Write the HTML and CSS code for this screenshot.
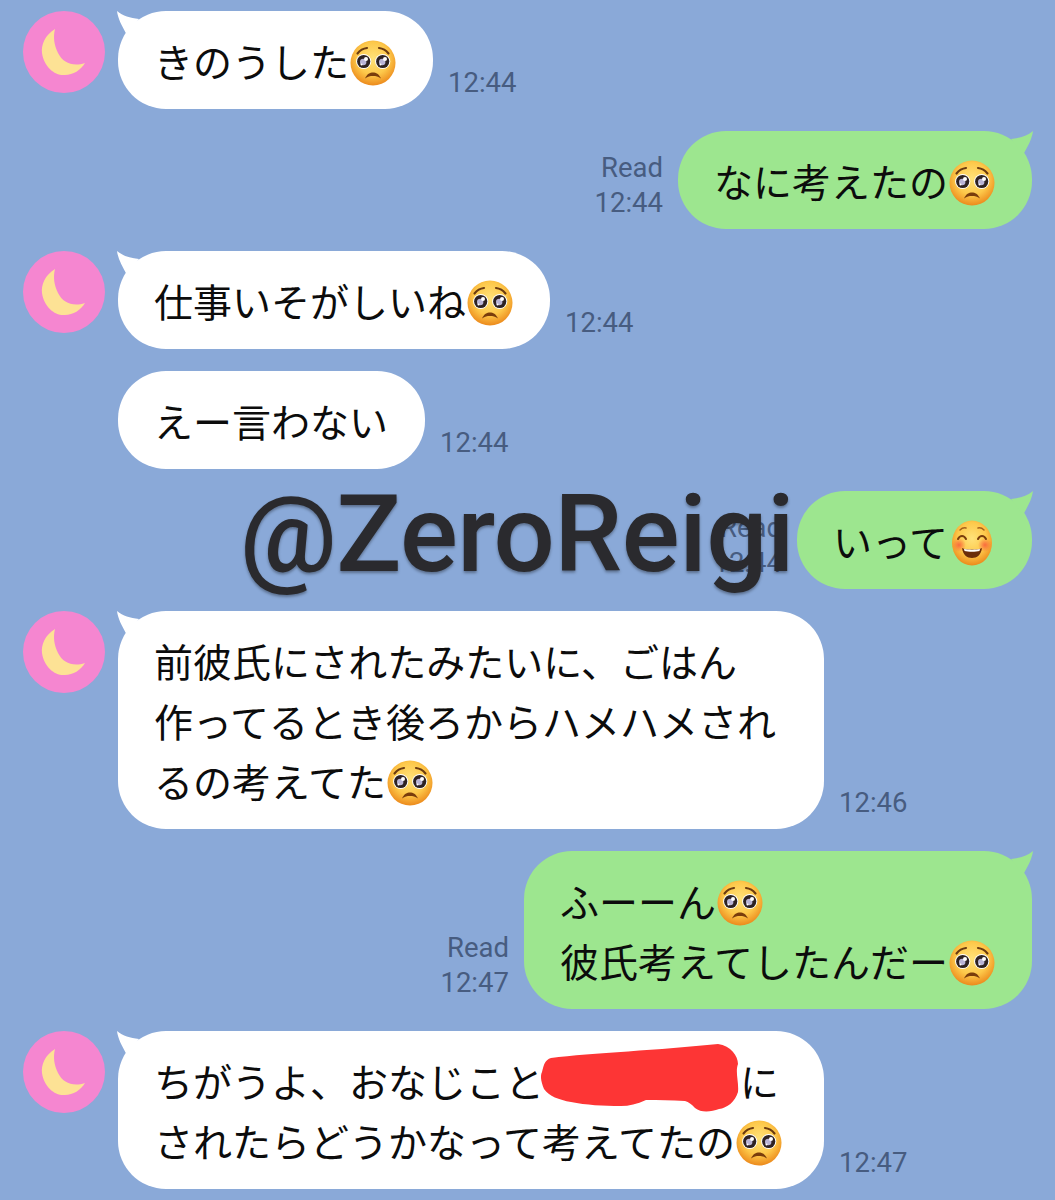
FILE: index.html
```html
<!DOCTYPE html>
<html lang="ja">
<head>
  <meta charset="UTF-8" />
  <title>Talk</title>
  <link rel="stylesheet" href="styles.css">
</head>
<body>
  <!-- shared drawings: avatar and the two emoji -->
  <svg class="defs" width="0" height="0">
    <defs>
      <radialGradient id="faceFill" cx="50%" cy="40%" r="60%">
        <stop offset="0" stop-color="#ffe27a"/>
        <stop offset="0.6" stop-color="#fdc84a"/>
        <stop offset="1" stop-color="#ec8a1c"/>
      </radialGradient>
      <radialGradient id="cheek" cx="50%" cy="50%" r="50%">
        <stop offset="0" stop-color="#f9603c" stop-opacity="0.9"/>
        <stop offset="1" stop-color="#f9603c" stop-opacity="0"/>
      </radialGradient>
      <symbol id="moon-avatar" viewBox="0 0 82 82">
        <circle cx="41" cy="41" r="41" fill="#f586d0"/>
        <path d="M32 18C22 24 18 34 19 42C21 56 32 65 42 64C50 64 58 59 62 52C50 56 40 52 35 42C31 34 30 26 32 18Z" fill="#fde295"/>
      </symbol>
      <symbol id="pleading" viewBox="0 0 46 46">
        <circle cx="23" cy="23" r="22.5" fill="url(#faceFill)"/>
        <path d="M7.500 13.500C9.500 11 13 8.500 17 8" fill="none" stroke="#6b3a10" stroke-width="2.200" stroke-linecap="round"/>
        <path d="M38.500 13.500C36.500 11 33 8.500 29 8" fill="none" stroke="#6b3a10" stroke-width="2.200" stroke-linecap="round"/>
        <circle cx="13.700" cy="21.500" r="7.600" fill="#fff"/>
        <circle cx="32.700" cy="21.500" r="7.600" fill="#fff"/>
        <circle cx="13.700" cy="21.500" r="6.600" fill="#2e2222"/>
        <circle cx="32.700" cy="21.500" r="6.600" fill="#2e2222"/>
        <circle cx="13.200" cy="22" r="3.200" fill="#b9b4d6"/>
        <circle cx="32.200" cy="22" r="3.200" fill="#b9b4d6"/>
        <circle cx="16" cy="19" r="2" fill="#fff"/>
        <circle cx="35" cy="19" r="2" fill="#fff"/>
        <circle cx="11.500" cy="24.500" r="1" fill="#fff"/>
        <circle cx="30.500" cy="24.500" r="1" fill="#fff"/>
        <path d="M15 38.500C17 34 20 32.500 23 32.500C26 32.500 29 34 31 38.500C28 36.500 26 36 23 36C20 36 18 36.500 15 38.500Z" fill="#7a3d0c"/>
      </symbol>
      <symbol id="blushing" viewBox="0 0 46 46">
        <ellipse cx="23" cy="23" rx="20" ry="22.500" fill="url(#faceFill)"/>
        <circle cx="10" cy="25" r="7" fill="url(#cheek)"/>
        <circle cx="36" cy="25" r="7" fill="url(#cheek)"/>
        <path d="M9 19C11 15 15 15 17 19" fill="none" stroke="#7a3d0c" stroke-width="2" stroke-linecap="round"/>
        <path d="M29 19C31 15 35 15 37 19" fill="none" stroke="#7a3d0c" stroke-width="2" stroke-linecap="round"/>
        <path d="M11 10C13 8 15 7.500 17 8" fill="none" stroke="#a5611c" stroke-width="1.500" stroke-linecap="round"/>
        <path d="M35 10C33 8 31 7.500 29 8" fill="none" stroke="#a5611c" stroke-width="1.500" stroke-linecap="round"/>
        <path d="M13 28C17 30 29 30 33 28C32 35 28 38 23 38C18 38 14 35 13 28Z" fill="#6b2d0a"/>
        <path d="M15 28.800C19 30 27 30 31 28.800L30.500 31C27 32 19 32 15.500 31Z" fill="#fff"/>
      </symbol>
    </defs>
  </svg>

  <div class="talk">
    <div class="row them">
      <svg class="avatar"><use href="#moon-avatar"/></svg>
      <div class="bubble">きのうした<svg class="emoji"><use href="#pleading"/></svg></div>
      <div class="meta">12:44</div>
    </div>

    <div class="row me">
      <div class="meta">Read<br>12:44</div>
      <div class="bubble">なに考えたの<svg class="emoji"><use href="#pleading"/></svg></div>
    </div>

    <div class="row them">
      <svg class="avatar"><use href="#moon-avatar"/></svg>
      <div class="bubble">仕事いそがしいね<svg class="emoji"><use href="#pleading"/></svg></div>
      <div class="meta">12:44</div>
    </div>

    <div class="row them cont">
      <div class="bubble">えー言わない</div>
      <div class="meta">12:44</div>
    </div>

    <div class="row me">
      <div class="meta">Read<br>12:44</div>
      <div class="bubble">いって<svg class="emoji"><use href="#blushing"/></svg></div>
    </div>

    <div class="row them">
      <svg class="avatar"><use href="#moon-avatar"/></svg>
      <div class="bubble wide">前彼氏にされたみたいに、ごはん<br>作ってるとき後ろからハメハメされ<br>るの考えてた<svg class="emoji"><use href="#pleading"/></svg></div>
      <div class="meta">12:46</div>
    </div>

    <div class="row me">
      <div class="meta">Read<br>12:47</div>
      <div class="bubble">ふーーん<svg class="emoji"><use href="#pleading"/></svg><br>彼氏考えてしたんだー<svg class="emoji"><use href="#pleading"/></svg></div>
    </div>

    <div class="row them">
      <svg class="avatar"><use href="#moon-avatar"/></svg>
      <div class="bubble wide">ちがうよ、おなじこと<span class="redacted"><svg class="scribble" viewBox="0 0 198 68"><path d="M10 14C50 9 120 6 177 0C190 2 197 12 197 20C194 28 198 38 197 48C194 58 186 64 178 65C170 68 160 69 154 64C150 60 148 58 144 57C130 56 118 56 105 56C96 60 88 62 80 62C62 62 45 61 30 58C18 56 8 52 3 45C0 38 -1 32 1 28C3 20 4 16 10 14Z"/></svg></span>に<br>されたらどうかなって考えてたの<svg class="emoji"><use href="#pleading"/></svg></div>
      <div class="meta">12:47</div>
    </div>
  </div>

  <div class="watermark">@ZeroReigi</div>
</body>
</html>
```

FILE: styles.css
```css
html, body {
  margin: 0;
  background: #8aa9d8;
}

body {
  position: relative;
  height: 1200px;
  overflow: hidden;
  font-family: "Noto Sans CJK JP", "Noto Sans", sans-serif;
}

.defs {
  position: absolute;
}

.talk {
  display: flex;
  flex-direction: column;
  gap: 22px;
  padding: 11px 23px 0;
}

.row {
  display: flex;
  align-items: flex-start;
}

.row.me {
  justify-content: flex-end;
}

.row.cont {
  padding-left: 95px;
}

.avatar {
  flex: none;
  width: 82px;
  height: 82px;
  margin-right: 13px;
}

.bubble {
  position: relative;
  padding: 19px 37px 19px 36px;
  border-radius: 48px;
  background: #fff;
  color: #0c0c0c;
  font-size: 39px;
  line-height: 60px;
  white-space: nowrap;
}

/* wrapped messages fill the full bubble width */
.bubble.wide {
  box-sizing: border-box;
  width: 706px;
}

.me .bubble {
  background: #9de68f;
}

/* tails sit on the first bubble of each run */
.them:not(.cont) .bubble::before,
.me .bubble::before {
  content: "";
  position: absolute;
  top: 0;
  width: 28px;
  height: 26px;
  background: inherit;
}

.them .bubble::before {
  left: -1px;
  clip-path: path("M0 0C6 5 13 7 22 8L10 24C5 15 1 8 0 0Z");
}

.me .bubble::before {
  right: -1px;
  clip-path: path("M28 0C22 5 15 7 6 8L18 24C23 15 27 8 28 0Z");
}

.emoji {
  width: 46px;
  height: 46px;
  margin-left: 1px;
  vertical-align: -9px;
}

/* holds the gap in the line, the stroke itself hangs over it */
.redacted {
  display: inline-block;
  position: relative;
  width: 196px;
  height: 0;
}

.scribble {
  position: absolute;
  top: -53px;
  left: -3px;
  width: 198px;
  height: 68px;
  fill: #fd3535;
}

.meta {
  flex: none;
  align-self: flex-end;
  margin: 0 15px 9px;
  color: #475c80;
  font-family: Roboto, sans-serif;
  font-size: 27.500px;
  line-height: 35px;
}

.them .meta {
  margin-right: 0;
  text-align: left;
}

.me .meta {
  margin-left: 0;
  text-align: right;
}

.watermark {
  position: absolute;
  top: 469px;
  left: 240px;
  color: #2a2a2e;
  font-family: Roboto, sans-serif;
  font-size: 108px;
  font-weight: 500;
  line-height: 130px;
  letter-spacing: -0.5px;
  text-shadow: 0 2px 3px rgba(0, 0, 0, 0.35);
  white-space: nowrap;
}
```
